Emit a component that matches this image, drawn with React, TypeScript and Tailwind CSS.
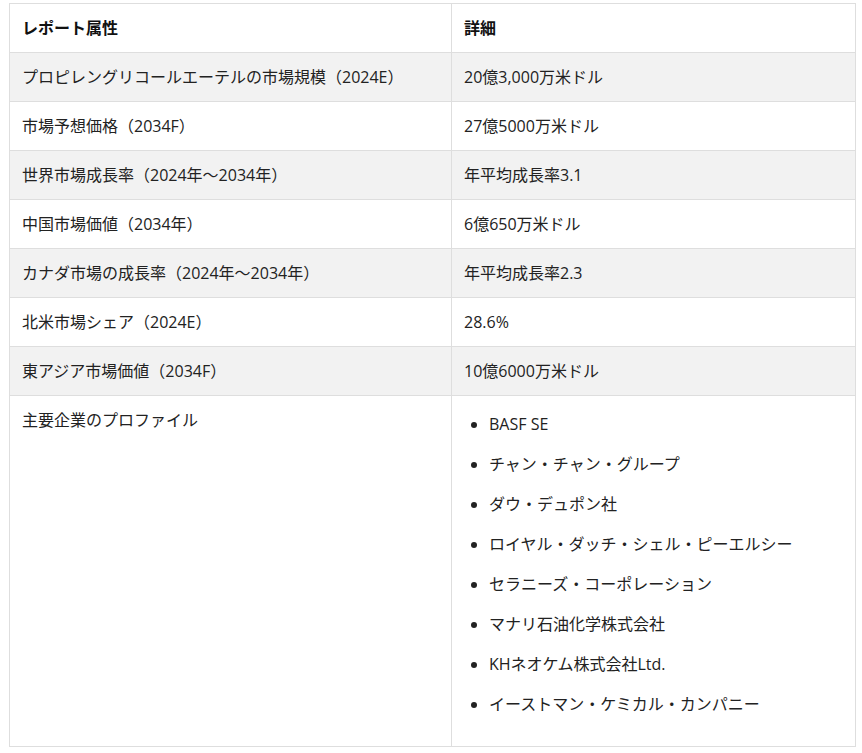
const rows = [
  { attr: 'プロピレングリコールエーテルの市場規模（2024E）', detail: '20億3,000万米ドル' },
  { attr: '市場予想価格（2034F）', detail: '27億5000万米ドル' },
  { attr: '世界市場成長率（2024年～2034年）', detail: '年平均成長率3.1' },
  { attr: '中国市場価値（2034年）', detail: '6億650万米ドル' },
  { attr: 'カナダ市場の成長率（2024年～2034年）', detail: '年平均成長率2.3' },
  { attr: '北米市場シェア（2024E）', detail: '28.6%' },
  { attr: '東アジア市場価値（2034F）', detail: '10億6000万米ドル' },
]

const companies = [
  'BASF SE',
  'チャン・チャン・グループ',
  'ダウ・デュポン社',
  'ロイヤル・ダッチ・シェル・ピーエルシー',
  'セラニーズ・コーポレーション',
  'マナリ石油化学株式会社',
  'KHネオケム株式会社Ltd.',
  'イーストマン・ケミカル・カンパニー',
]

export default function App() {
  return (
    <div
      className="min-h-screen bg-white pl-[9px] pt-[3px] text-[16px] leading-6 text-[#222]"
      style={{ fontFamily: '"Open Sans", "Noto Sans CJK JP", sans-serif' }}
    >
      <table className="w-[847px] table-fixed border-collapse border border-[#dedede]">
        <colgroup>
          <col className="w-[442px]" />
          <col />
        </colgroup>
        <thead>
          <tr>
            <th className="border border-[#dedede] px-3 py-3 text-left font-bold text-[#111]">レポート属性</th>
            <th className="border border-[#dedede] px-3 py-3 text-left font-bold text-[#111]">詳細</th>
          </tr>
        </thead>
        <tbody>
          {rows.map((r, i) => (
            <tr key={r.attr} className={i % 2 === 0 ? 'bg-[#f2f2f2]' : 'bg-white'}>
              <td className="border border-[#dedede] px-3 py-3">{r.attr}</td>
              <td className="border border-[#dedede] px-3 py-3">{r.detail}</td>
            </tr>
          ))}
          <tr>
            <td className="border border-[#dedede] px-3 py-3 align-top">主要企業のプロファイル</td>
            <td className="border border-[#dedede] px-3 pt-[16px] pb-[14px] align-top">
              <ul className="list-disc pl-[25px]">
                {companies.map((c) => (
                  <li key={c} className="mb-4">
                    {c}
                  </li>
                ))}
              </ul>
            </td>
          </tr>
        </tbody>
      </table>
    </div>
  )
}
